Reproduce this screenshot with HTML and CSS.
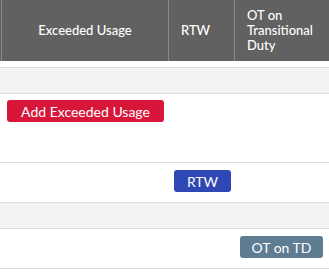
FILE: index.html
```html
<!DOCTYPE html>
<html lang="en">
<head>
    <meta charset="UTF-8">
    <meta name="viewport" content="width=device-width, initial-scale=1.0">
    <title>Usage Grid</title>
    <link rel="stylesheet" href="styles.css">
</head>
<body>
    <div class="grid">
        <div class="head">
            <div class="hcell center">Exceeded Usage</div>
            <div class="hcell">RTW</div>
            <div class="hcell">OT on Transitional Duty</div>
        </div>

        <div class="row shade"></div>
        <div class="row tall">
            <div class="cell"><button class="btn red">Add Exceeded Usage</button></div>
            <div class="cell"></div>
            <div class="cell"></div>
        </div>
        <div class="row">
            <div class="cell"></div>
            <div class="cell"><button class="btn blue rtw">RTW</button></div>
            <div class="cell"></div>
        </div>
        <div class="row shade"></div>
        <div class="row">
            <div class="cell"></div>
            <div class="cell"></div>
            <div class="cell"><button class="btn slate">OT on TD</button></div>
        </div>
    </div>
</body>
</html>
```

FILE: styles.css
```css
body { margin: 0; padding: 0; font-family: Lato, "Open Sans", sans-serif; background: #fff; overflow: hidden; }
.grid { width: 345px; }
.head { display: grid; grid-template-columns: 167px 66px 1fr; height: 61px; background-color: #616161; padding-left: 1px; margin-bottom: 6px; }
.hcell { border-left: 1px solid #8a8a8a; color: #fff; font-size: 13px; font-weight: 500; line-height: 15px; padding: 0 12px; display: flex; align-items: center; }
.hcell.center { justify-content: center; }
.row { display: grid; grid-template-columns: 168px 66px 1fr; border-top: 1px solid #dcdcdc; min-height: 39px; }
.row.shade { background-color: #f3f3f3; min-height: 25px; }
.row.tall { min-height: 68px; }
.row.tall .cell { padding-top: 6px; }
.row:last-child { border-bottom: 1px solid #dcdcdc; }
.cell { padding: 7px 6px 0 6px; }
.row .cell:first-child { padding: 6px 4px 0 7px; }
.btn { font-family: inherit; font-size: 14px; color: #fff; border: none; border-radius: 3px; height: 22px; padding: 0; white-space: nowrap; cursor: pointer; }
.red { background-color: #d7163a; width: 157px; }
.blue { background-color: #2e47b4; }
.rtw { width: 57px; }
.slate { background-color: #5e7c92; width: 83px; }
```
